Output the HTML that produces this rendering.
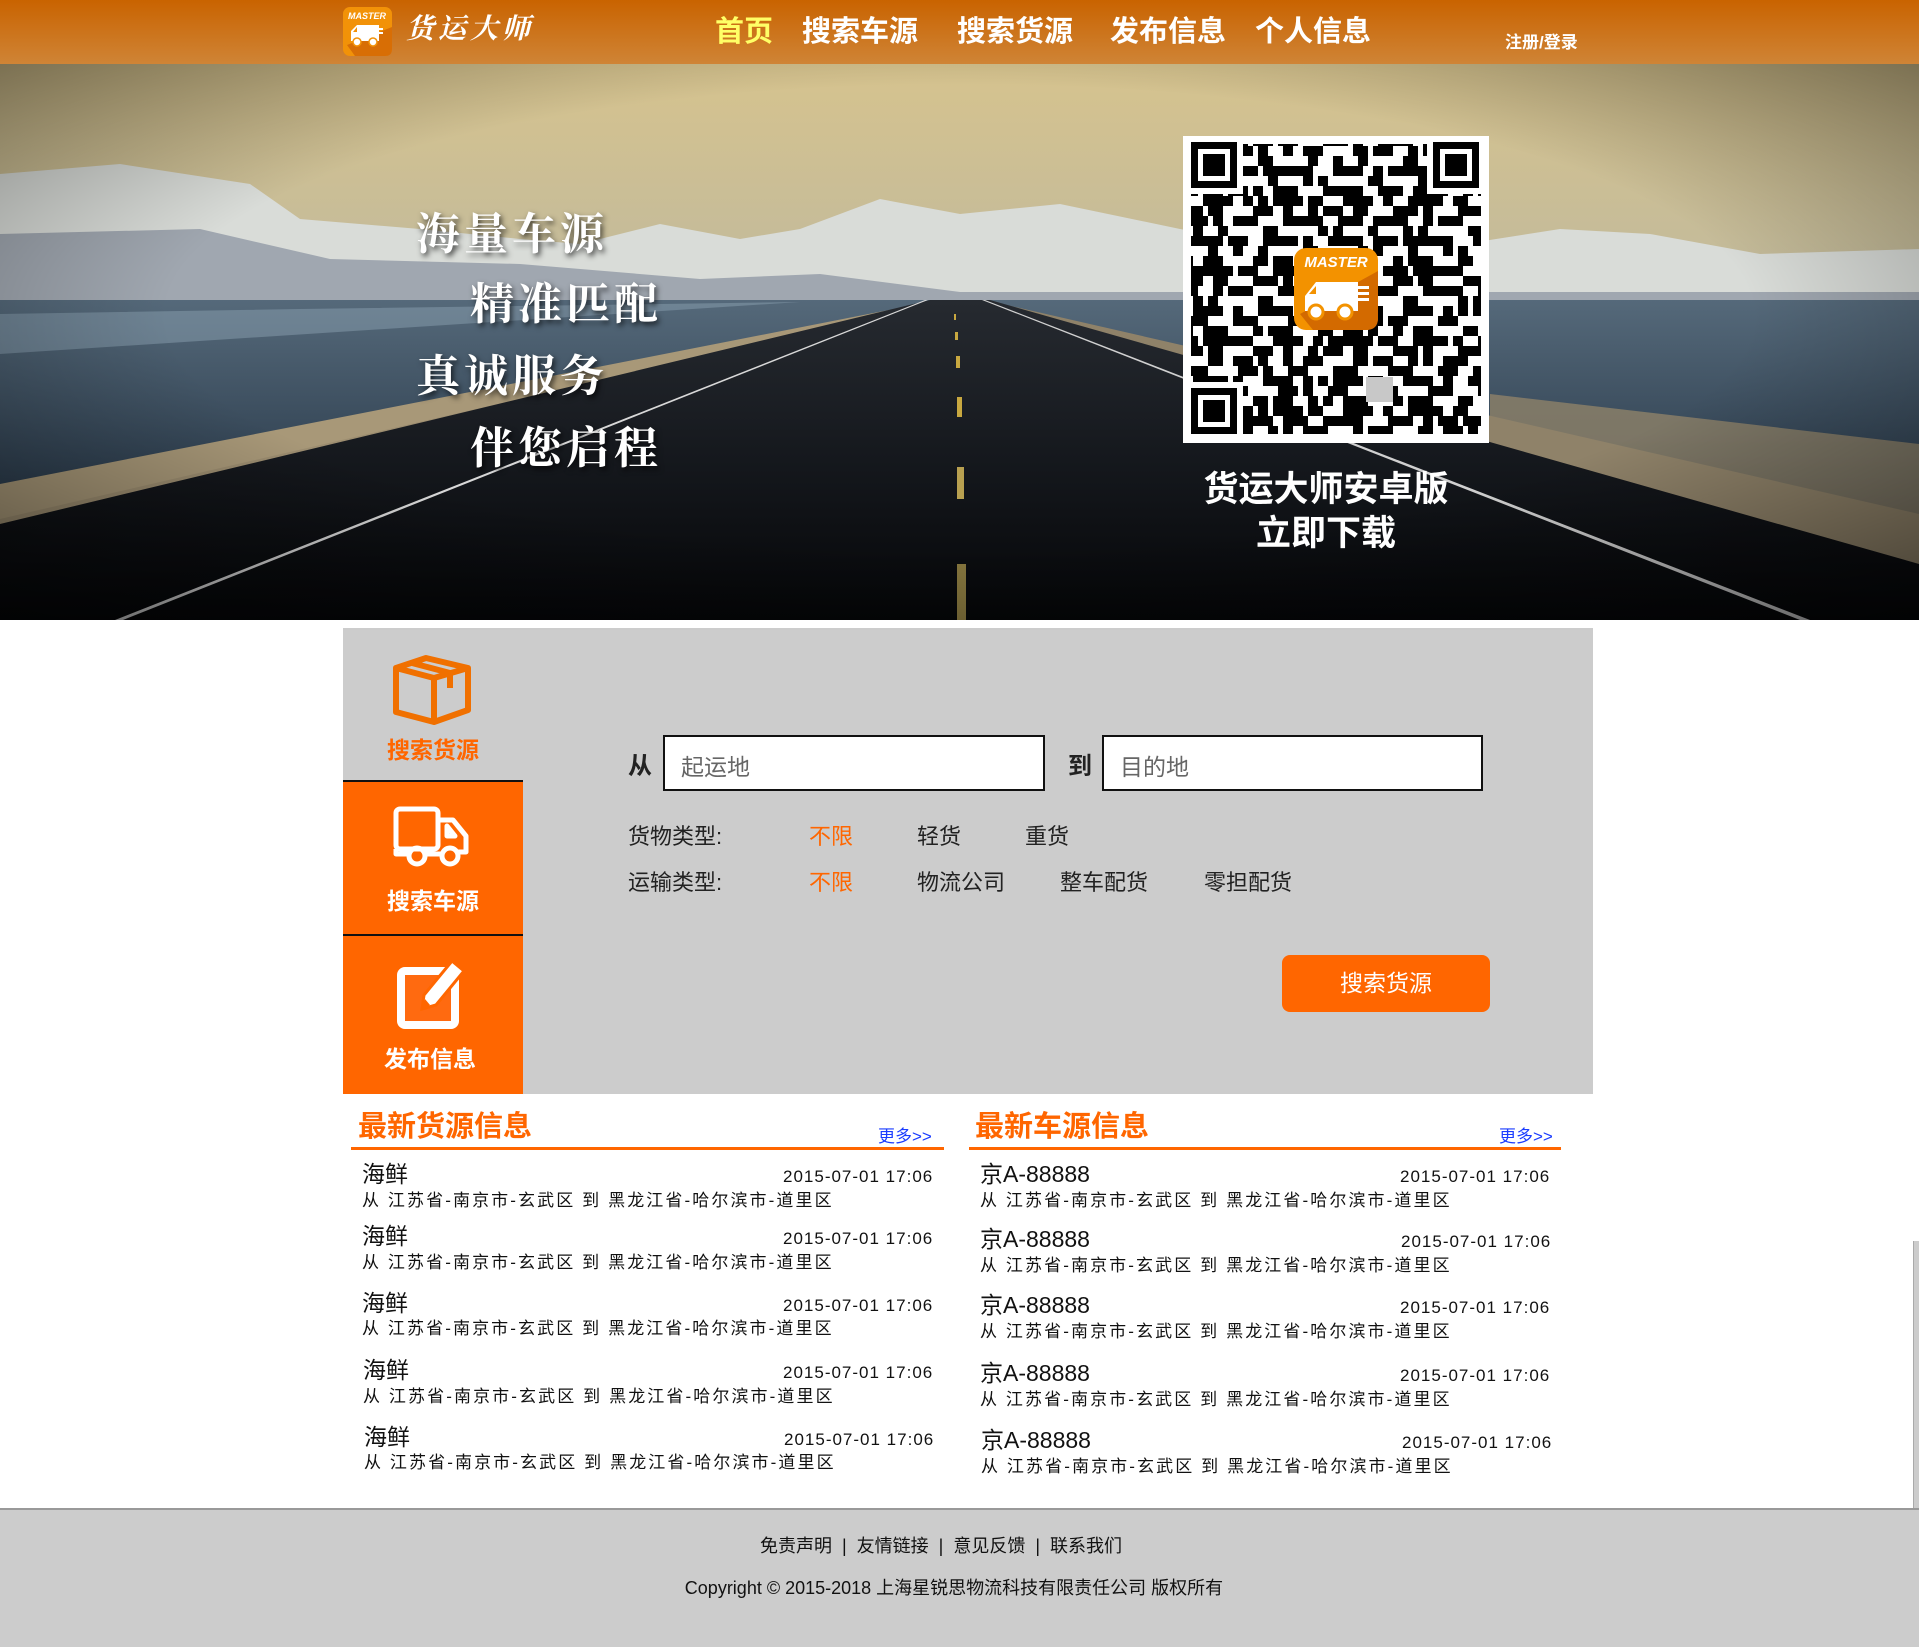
<!DOCTYPE html>
<html><head><meta charset="utf-8">
<style>
*{margin:0;padding:0;box-sizing:border-box}
body{width:1919px;height:1647px;position:relative;overflow:hidden;background:#fff;font-family:"Liberation Sans","Noto Sans CJK SC",sans-serif}
.a{position:absolute;white-space:nowrap}
#hdr{left:0;top:0;width:1919px;height:64px;background:linear-gradient(#c96300,#cf8436)}
.nav{top:12px;font-size:29px;font-weight:bold;color:#fff;line-height:40px}
.cjkS{font-family:"Liberation Serif","Noto Serif CJK SC",serif}
.slog{font-size:44px;font-weight:bold;color:#fff;text-shadow:2px 3px 6px rgba(0,0,0,.7);letter-spacing:4px}
.lbl{font-size:22px;color:#222;line-height:30px}
.or{color:#ff6600}
.inp{background:#fff;border:2px solid #111;font-size:23px;color:#666;padding-left:16px;line-height:60px}
.side{left:343px;width:180px;text-align:center;font-size:23px;font-weight:bold}
.ttl{font-size:29px;font-weight:bold;color:#ff6600;line-height:36px}
.more{font-size:17px;color:#1a3cff}
.nm{font-size:23px;color:#111;line-height:28px}
.ad{font-size:17px;color:#111;line-height:22px;letter-spacing:2.1px}
.dt{font-size:17px;color:#111;line-height:22px;letter-spacing:1px}
</style></head><body>

<div class="a" id="hdr"></div>
<svg class="a" style="left:343px;top:7px" width="49" height="49" viewBox="0 0 49 49">
<rect width="49" height="49" rx="7" fill="#f29208"/>
<path d="M4 38 L49 20 L49 42 Q49 49 42 49 L12 49 Z" fill="#d86e05"/>
<text x="24" y="12" font-size="9" font-weight="bold" font-style="italic" fill="#fff" text-anchor="middle" font-family="Liberation Sans">MASTER</text>
<path d="M8 34 L8 24 L14 18 L36 18 L36 34 Z" fill="#fff"/>
<rect x="28" y="21" width="12" height="2" fill="#fff"/><rect x="30" y="25" width="10" height="2" fill="#fff"/>
<path d="M10 25 L14 20 L14 25Z" fill="#f29208"/>
<circle cx="14" cy="35" r="4" fill="#fff" stroke="#f29208" stroke-width="1.5"/><circle cx="30" cy="35" r="4" fill="#fff" stroke="#f29208" stroke-width="1.5"/>
</svg>
<div class="a cjkS" style="left:406px;top:10px;font-size:28px;color:#fff;font-style:italic;font-weight:bold;letter-spacing:4px;line-height:40px">货运大师</div>
<div class="a nav" style="left:715px;color:#ffff66">首页</div>
<div class="a nav" style="left:802px">搜索车源</div>
<div class="a nav" style="left:957px">搜索货源</div>
<div class="a nav" style="left:1110px">发布信息</div>
<div class="a nav" style="left:1255px">个人信息</div>
<div class="a" style="left:1505px;top:28px;font-size:17px;color:#fff;font-weight:bold">注册/登录</div>

<svg class="a" style="left:0;top:64px" width="1919" height="556" viewBox="0 0 1919 556">
<defs>
<linearGradient id="sky" x1="0" y1="0" x2="0" y2="1">
<stop offset="0" stop-color="#d6c38e"/><stop offset=".35" stop-color="#c4bb9a"/><stop offset=".7" stop-color="#aab2ae"/><stop offset="1" stop-color="#9aa6aa"/></linearGradient>
<linearGradient id="sea" x1="0" y1="0" x2="0" y2="1"><stop offset="0" stop-color="#55697a"/><stop offset="1" stop-color="#263646"/></linearGradient>
<linearGradient id="rd" x1="0" y1="0" x2="0" y2="1"><stop offset="0" stop-color="#262a30"/><stop offset=".5" stop-color="#15181d"/><stop offset="1" stop-color="#050608"/></linearGradient>
<radialGradient id="vig" cx=".5" cy=".45" r=".75"><stop offset=".55" stop-color="#000" stop-opacity="0"/><stop offset="1" stop-color="#000" stop-opacity=".55"/></radialGradient>
</defs>
<rect width="1919" height="556" fill="url(#sky)"/>
<path d="M0 110 L120 100 L250 120 L300 155 L420 165 L520 175 L580 180 L660 160 L740 175 L800 165 L880 135 L960 150 L1060 140 L1180 165 L1260 180 L1400 190 L1560 165 L1650 170 L1760 190 L1919 185 L1919 240 L0 240 Z" fill="#d9dcd8"/>
<path d="M0 170 L200 165 L330 195 L520 200 L700 215 L820 210 L960 228 L1919 228 L1919 245 L0 245 Z" fill="#8790a0" opacity=".7"/>
<rect x="0" y="236" width="1919" height="220" fill="url(#sea)"/>
<path d="M0 250 L300 245 L520 242 L800 238 L0 290Z" fill="#8aa0b0" opacity=".5"/>
<path d="M940 236 L0 420 L0 460 L930 240 Z" fill="#a89878"/>
<path d="M930 240 L0 455 L0 520 L935 240 Z" fill="#9c8d70"/>
<path d="M985 236 L1919 450 L1919 540 L990 236 Z" fill="#8f8269"/>
<path d="M1490 330 L1919 380 L1919 460 L1490 400Z" fill="#8f8269" opacity=".8"/>
<path d="M930 236 L990 236 L1919 500 L1919 556 L0 556 L0 460 Z" fill="url(#rd)"/>
<path d="M925 236 L115 556 L123 556 L928 236Z" fill="#d8d8d8"/>
<path d="M982 236 L1800 556 L1810 556 L985 236Z" fill="#d0d0d0"/>
<rect x="954" y="250" width="2" height="6" fill="#c8a840"/>
<rect x="955" y="268" width="3" height="8" fill="#c8a840"/>
<rect x="956" y="292" width="4" height="12" fill="#c8a840"/>
<rect x="957" y="333" width="5" height="20" fill="#c8a840"/>
<rect x="957" y="403" width="7" height="32" fill="#b8a050"/>
<rect x="957" y="500" width="9" height="56" fill="#8a7a40"/>
<rect width="1919" height="556" fill="url(#vig)"/>
</svg>
<div class="a cjkS slog" style="left:416px;top:198px">海量车源</div>
<div class="a cjkS slog" style="left:470px;top:268px">精准匹配</div>
<div class="a cjkS slog" style="left:416px;top:340px">真诚服务</div>
<div class="a cjkS slog" style="left:470px;top:412px">伴您启程</div>

<svg class="a" style="left:1183px;top:136px" width="306" height="307" viewBox="0 0 306 307">
<defs>
<pattern id="q1" width="70" height="70" patternUnits="userSpaceOnUse">
<rect x="0" y="0" width="20" height="10"/><rect x="30" y="0" width="10" height="20"/><rect x="50" y="10" width="20" height="10"/><rect x="10" y="20" width="10" height="20"/><rect x="20" y="30" width="20" height="10"/><rect x="50" y="30" width="10" height="20"/><rect x="0" y="50" width="10" height="10"/><rect x="20" y="50" width="20" height="20"/><rect x="60" y="60" width="10" height="10"/><rect x="40" y="60" width="10" height="10"/>
</pattern>
<pattern id="q2" width="50" height="50" patternUnits="userSpaceOnUse" x="5">
<rect x="0" y="0" width="10" height="10"/><rect x="20" y="10" width="10" height="20"/><rect x="40" y="0" width="10" height="10"/><rect x="0" y="30" width="20" height="10"/><rect x="30" y="40" width="10" height="10"/>
</pattern>
</defs>
<rect width="306" height="307" fill="#fff"/>
<rect x="8" y="8" width="290" height="290" fill="url(#q1)"/>
<rect x="8" y="8" width="290" height="290" fill="url(#q2)"/>
<g>
<rect x="6" y="4" width="54" height="54" fill="#fff"/><rect x="8" y="6" width="46" height="46" fill="#000"/><rect x="15" y="13" width="32" height="32" fill="#fff"/><rect x="20" y="18" width="22" height="22" fill="#000"/>
<rect x="244" y="4" width="56" height="54" fill="#fff"/><rect x="250" y="6" width="46" height="46" fill="#000"/><rect x="257" y="13" width="32" height="32" fill="#fff"/><rect x="262" y="18" width="22" height="22" fill="#000"/>
<rect x="6" y="246" width="54" height="56" fill="#fff"/><rect x="8" y="252" width="46" height="46" fill="#000"/><rect x="15" y="259" width="32" height="32" fill="#fff"/><rect x="20" y="264" width="22" height="22" fill="#000"/>
</g>
<rect x="183" y="241" width="27" height="25" fill="#c8c8c8"/>
<rect x="111" y="112" width="84" height="82" rx="12" fill="#f39200"/>
<path d="M117 178 L195 135 L195 182 Q195 194 183 194 L130 194 Z" fill="#d36a00"/>
<text x="153" y="131" font-size="15" font-weight="bold" font-style="italic" fill="#fff" text-anchor="middle" font-family="Liberation Sans">MASTER</text>
<path d="M122 175 L122 160 L133 146 L175 146 L175 175 Z" fill="#fff"/>
<path d="M126 158 L133 150 L133 158Z" fill="#f39200"/>
<rect x="160" y="150" width="26" height="3" fill="#fff"/><rect x="164" y="156" width="22" height="3" fill="#fff"/><rect x="166" y="162" width="20" height="3" fill="#fff"/>
<circle cx="133" cy="176" r="7" fill="#fff" stroke="#f39200" stroke-width="3"/><circle cx="162" cy="176" r="7" fill="#fff" stroke="#f39200" stroke-width="3"/>
</svg>
<div class="a" style="left:1183px;top:468px;width:286px;text-align:center;font-size:35px;font-weight:bold;color:#fff;line-height:44px">货运大师安卓版<br>立即下载</div>

<div class="a" style="left:343px;top:628px;width:1250px;height:466px;background:#cccccc"></div>
<div class="a" style="left:343px;top:781px;width:180px;height:313px;background:#ff6600"></div>
<div class="a" style="left:343px;top:780px;width:180px;height:2px;background:#111"></div>
<div class="a" style="left:343px;top:934px;width:180px;height:2px;background:#111"></div>
<svg class="a" style="left:392px;top:654px" width="80" height="72" viewBox="0 0 80 72">
<g fill="none" stroke="#f07000" stroke-width="6" stroke-linejoin="round">
<path d="M4 14 L34 4 L76 14 L76 56 L42 68 L4 58 Z"/><path d="M4 14 L42 24 L76 14"/><path d="M42 24 L42 68"/>
<path d="M20 9 L58 19 L58 34"/>
</g></svg>
<div class="a side or" style="top:731px;color:#ff6600">搜索货源</div>
<svg class="a" style="left:393px;top:806px" width="80" height="64" viewBox="0 0 80 64">
<g fill="none" stroke="#fff" stroke-width="5" stroke-linejoin="round">
<rect x="3" y="3" width="42" height="40" rx="4"/><path d="M45 14 L60 14 L73 30 L73 46 L65 46"/><path d="M54 20 L62 30 L54 30 Z"/>
<path d="M3 43 L3 48 L15 48 M32 48 L48 48"/>
<circle cx="24" cy="50" r="8"/><circle cx="57" cy="50" r="8"/></g></svg>
<div class="a side" style="top:882px;color:#fff">搜索车源</div>
<svg class="a" style="left:394px;top:957px" width="72" height="74" viewBox="0 0 72 74">
<rect x="3" y="10" width="62" height="62" rx="8" fill="#fff"/><rect x="11" y="18" width="46" height="46" fill="#ff6a10"/>
<path d="M28 52 L30 38 L58 4 L70 14 L42 48 Z" fill="#fff" stroke="#ff6600" stroke-width="3"/>
<path d="M28 52 L36 48 L31 42Z" fill="#ff6600"/>
</svg>
<div class="a side" style="top:1040px;color:#fff;left:340px">发布信息</div>

<div class="a lbl" style="left:628px;top:752px;font-size:24px;font-weight:bold">从</div>
<div class="a inp" style="left:663px;top:735px;width:382px;height:56px">起运地</div>
<div class="a lbl" style="left:1068px;top:752px;font-size:24px;font-weight:bold">到</div>
<div class="a inp" style="left:1102px;top:735px;width:381px;height:56px">目的地</div>
<div class="a lbl" style="left:628px;top:822px">货物类型:</div>
<div class="a lbl or" style="left:809px;top:822px">不限</div>
<div class="a lbl" style="left:917px;top:822px">轻货</div>
<div class="a lbl" style="left:1025px;top:822px">重货</div>
<div class="a lbl" style="left:628px;top:868px">运输类型:</div>
<div class="a lbl or" style="left:809px;top:868px">不限</div>
<div class="a lbl" style="left:917px;top:868px">物流公司</div>
<div class="a lbl" style="left:1060px;top:868px">整车配货</div>
<div class="a lbl" style="left:1204px;top:868px">零担配货</div>
<div class="a" style="left:1282px;top:955px;width:208px;height:57px;background:#ff6600;border-radius:8px;color:#fff;font-size:23px;text-align:center;line-height:57px">搜索货源</div>

<div class="a ttl" style="left:358px;top:1109px">最新货源信息</div>
<div class="a more" style="left:878px;top:1122px">更多&gt;&gt;</div>
<div class="a" style="left:351px;top:1147px;width:593px;height:3px;background:#ff6600"></div>
<div class="a ttl" style="left:975px;top:1109px">最新车源信息</div>
<div class="a more" style="left:1499px;top:1122px">更多&gt;&gt;</div>
<div class="a" style="left:969px;top:1147px;width:592px;height:3px;background:#ff6600"></div>

<div class="a nm" style="left:362px;top:1160px">海鲜</div><div class="a dt" style="left:783px;top:1166px">2015-07-01 17:06</div><div class="a ad" style="left:362px;top:1190px">从 江苏省-南京市-玄武区 到 黑龙江省-哈尔滨市-道里区</div>
<div class="a nm" style="left:362px;top:1222px">海鲜</div><div class="a dt" style="left:783px;top:1228px">2015-07-01 17:06</div><div class="a ad" style="left:362px;top:1252px">从 江苏省-南京市-玄武区 到 黑龙江省-哈尔滨市-道里区</div>
<div class="a nm" style="left:362px;top:1289px">海鲜</div><div class="a dt" style="left:783px;top:1295px">2015-07-01 17:06</div><div class="a ad" style="left:362px;top:1318px">从 江苏省-南京市-玄武区 到 黑龙江省-哈尔滨市-道里区</div>
<div class="a nm" style="left:363px;top:1356px">海鲜</div><div class="a dt" style="left:783px;top:1362px">2015-07-01 17:06</div><div class="a ad" style="left:363px;top:1386px">从 江苏省-南京市-玄武区 到 黑龙江省-哈尔滨市-道里区</div>
<div class="a nm" style="left:364px;top:1423px">海鲜</div><div class="a dt" style="left:784px;top:1429px">2015-07-01 17:06</div><div class="a ad" style="left:364px;top:1452px">从 江苏省-南京市-玄武区 到 黑龙江省-哈尔滨市-道里区</div>

<div class="a nm" style="left:980px;top:1160px">京A-88888</div><div class="a dt" style="left:1400px;top:1166px">2015-07-01 17:06</div><div class="a ad" style="left:980px;top:1190px">从 江苏省-南京市-玄武区 到 黑龙江省-哈尔滨市-道里区</div>
<div class="a nm" style="left:980px;top:1225px">京A-88888</div><div class="a dt" style="left:1401px;top:1231px">2015-07-01 17:06</div><div class="a ad" style="left:980px;top:1255px">从 江苏省-南京市-玄武区 到 黑龙江省-哈尔滨市-道里区</div>
<div class="a nm" style="left:980px;top:1291px">京A-88888</div><div class="a dt" style="left:1400px;top:1297px">2015-07-01 17:06</div><div class="a ad" style="left:980px;top:1321px">从 江苏省-南京市-玄武区 到 黑龙江省-哈尔滨市-道里区</div>
<div class="a nm" style="left:980px;top:1359px">京A-88888</div><div class="a dt" style="left:1400px;top:1365px">2015-07-01 17:06</div><div class="a ad" style="left:980px;top:1389px">从 江苏省-南京市-玄武区 到 黑龙江省-哈尔滨市-道里区</div>
<div class="a nm" style="left:981px;top:1426px">京A-88888</div><div class="a dt" style="left:1402px;top:1432px">2015-07-01 17:06</div><div class="a ad" style="left:981px;top:1456px">从 江苏省-南京市-玄武区 到 黑龙江省-哈尔滨市-道里区</div>

<div class="a" style="left:1913px;top:1241px;width:6px;height:270px;background:#cccccc;border-left:1px solid #aaa"></div>

<div class="a" style="left:0;top:1508px;width:1919px;height:139px;background:#cccccc;border-top:2px solid #999"></div>
<div class="a" style="left:0;top:1534px;width:1882px;text-align:center;font-size:18px;color:#111;line-height:24px">免责声明 &nbsp;| &nbsp;友情链接 &nbsp;| &nbsp;意见反馈 &nbsp;| &nbsp;联系我们</div>
<div class="a" style="left:0;top:1576px;width:1908px;text-align:center;font-size:18px;color:#111;line-height:24px">Copyright © 2015-2018 上海星锐思物流科技有限责任公司 版权所有</div>
</body></html>
